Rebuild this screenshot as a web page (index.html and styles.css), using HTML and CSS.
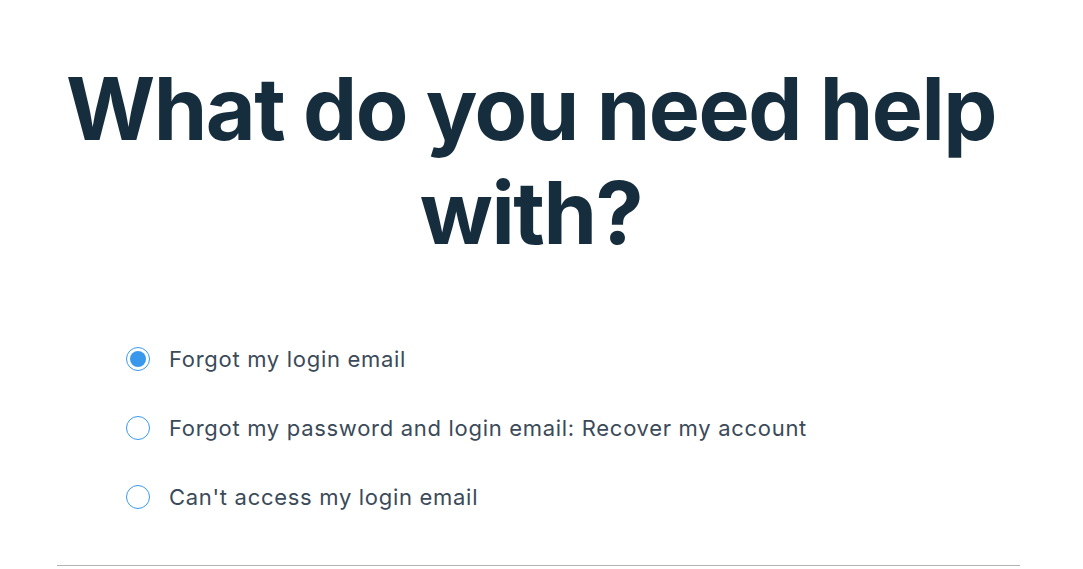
FILE: index.html
```html
<!doctype html>
<html lang="en">
<head>
	<meta charset="UTF-8">
	<title>Help</title>
	<link rel="stylesheet" href="styles.css">
</head>
<body>
	<h1 class="title">What do you need help with?</h1>
	<div class="page">
		<ul class="options">
			<li class="option">
				<span class="radio checked"></span>
				<span class="label">Forgot my login email</span>
			</li>
			<li class="option">
				<span class="radio"></span>
				<span class="label">Forgot my password and login email: Recover my account</span>
			</li>
			<li class="option">
				<span class="radio"></span>
				<span class="label">Can't access my login email</span>
			</li>
		</ul>
		<div class="divider"></div>
	</div>
</body>
</html>
```

FILE: styles.css
```css
body,ul,li,h1{
	margin: 0;
	padding: 0;
	list-style: none;
}
body{
	background: #fff;
	font-family: Inter, "Noto Sans", sans-serif;
	color: #162d3d;
}
.title{
	padding: 57px 21px 0 0;
	text-align: center;
	font-size: 86px;
	font-weight: 700;
	line-height: 104px;
	letter-spacing: -1.5px;
	color: #162d3d;
}
.page{
	width: 963px;
	margin-left: 57px;
}
.options{
	margin-top: 79px;
	padding-left: 69px;
	display: flex;
	flex-direction: column;
	gap: 39px;
}
.option{
	display: flex;
	align-items: center;
	gap: 19px;
	height: 30px;
}
.radio{
	width: 24px;
	height: 24px;
	border: 1px solid #3899ec;
	border-radius: 50%;
	box-sizing: border-box;
	display: flex;
	align-items: center;
	justify-content: center;
	flex-shrink: 0;
}
.radio.checked::after{
	content: "";
	width: 16px;
	height: 16px;
	border-radius: 50%;
	background: #3899ec;
}
.label{
	font-size: 22px;
	letter-spacing: 0.7px;
	color: #3b4a59;
}
.divider{
	margin-top: 53px;
	height: 1px;
	background: #b3b3b3;
}
```
